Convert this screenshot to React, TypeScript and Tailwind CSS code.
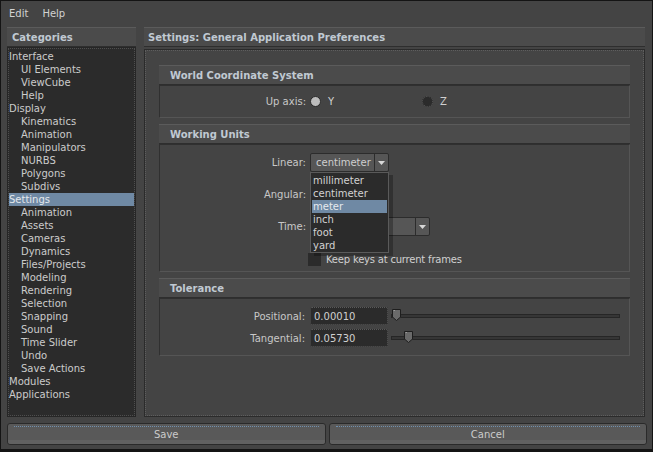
import React from "react";

const categories: { label: string; sub?: boolean; selected?: boolean }[] = [
  { label: "Interface" },
  { label: "UI Elements", sub: true },
  { label: "ViewCube", sub: true },
  { label: "Help", sub: true },
  { label: "Display" },
  { label: "Kinematics", sub: true },
  { label: "Animation", sub: true },
  { label: "Manipulators", sub: true },
  { label: "NURBS", sub: true },
  { label: "Polygons", sub: true },
  { label: "Subdivs", sub: true },
  { label: "Settings", selected: true },
  { label: "Animation", sub: true },
  { label: "Assets", sub: true },
  { label: "Cameras", sub: true },
  { label: "Dynamics", sub: true },
  { label: "Files/Projects", sub: true },
  { label: "Modeling", sub: true },
  { label: "Rendering", sub: true },
  { label: "Selection", sub: true },
  { label: "Snapping", sub: true },
  { label: "Sound", sub: true },
  { label: "Time Slider", sub: true },
  { label: "Undo", sub: true },
  { label: "Save Actions", sub: true },
  { label: "Modules" },
  { label: "Applications" },
];

const units = ["millimeter", "centimeter", "meter", "inch", "foot", "yard"];

function SectionHeader({ title }: { title: string }) {
  return (
    <div className="h-[20px] bg-[#4b4b4b] border-t border-[#5b5b5b] border-b border-b-[#2e2e2e] flex items-center pl-[11px] font-bold text-[#c0c9d2]">
      {title}
    </div>
  );
}

function Arrow() {
  return (
    <svg width="7" height="4" viewBox="0 0 7 4">
      <path d="M0 0 H7 L3.5 4 Z" fill="#d8d8d8" />
    </svg>
  );
}

function Dropdown({ value, width }: { value: string; width: string }) {
  return (
    <div className={`${width} h-[19px] bg-[#565656] border border-[#2c2c2c] rounded-[2px] flex items-stretch`}>
      <div className="flex-1 flex items-center pl-[5px] text-[#cfcfcf]">{value}</div>
      <div className="w-[14px] border-l border-[#2c2c2c] flex items-center justify-center">
        <Arrow />
      </div>
    </div>
  );
}

function Thumb() {
  return (
    <svg width="11" height="14" viewBox="0 0 11 14">
      <path d="M1.5 1.5 H9.5 V9 L5.5 12.5 L1.5 9 Z" fill="#6a6a6a" stroke="#1e1e1e" strokeWidth="1" />
      <path d="M2.5 2.5 H4" stroke="#9a9a9a" strokeWidth="1" />
    </svg>
  );
}

function SliderRow({ label, value, pos }: { label: string; value: string; pos: number }) {
  return (
    <div className="h-[18px] flex items-center">
      <div className="w-[145px] text-right text-[#c8c8c8]">{label}:</div>
      <div className="ml-[5px] w-[78px] h-[18px] bg-[#2b2b2b] border border-dotted border-[#5a5a5a] rounded-[2px] flex items-center pl-[3px] text-[#d0d0d0]">
        {value}
      </div>
      <div className="relative ml-[3px] w-[229px] h-[18px] flex items-center">
        <div className="w-full h-[4px] bg-[#363636] border border-[#262626]" />
        <div className="absolute top-[1px]" style={{ left: pos }}>
          <Thumb />
        </div>
      </div>
    </div>
  );
}

export default function App() {
  return (
    <div
      className="w-[653px] h-[452px] bg-[#444444] border border-[#141414] border-b-[3px] flex flex-col text-[10px] leading-[13px] text-[#c8c8c8] overflow-hidden"
      style={{ fontFamily: "'DejaVu Sans', sans-serif" }}
    >
      {/* menu bar */}
      <div className="h-[24px] flex items-center pl-[8px] gap-[14px] text-[#d2d2d2]">
        <span>Edit</span>
        <span>Help</span>
      </div>

      {/* main */}
      <div className="flex pl-[6px] pr-[7px] pt-[2px]">
        {/* left */}
        <div className="w-[129px] flex flex-col">
          <div className="h-[20px] bg-[#4b4b4b] border-t border-[#5b5b5b] border-b border-b-[#2e2e2e] flex items-center pl-[5px] font-bold text-[#c0c9d2]">
            Categories
          </div>
          <div className="h-[370px] border border-[#262626] bg-[#2b2b2b]">
            <div className="h-full border border-dotted border-[#4e4e4e] pt-[1px]">
              {categories.map((c, i) => (
                <div
                  key={i}
                  className={`h-[13px] flex items-center ${c.sub ? "pl-[12px]" : "pl-[0px]"} ${
                    c.selected ? "bg-[#6f89a4] text-[#e4e8ec]" : "text-[#cbcbcb]"
                  }`}
                >
                  {c.label}
                </div>
              ))}
            </div>
          </div>
        </div>

        {/* right */}
        <div className="ml-[8px] w-[501px] flex flex-col">
          <div className="h-[20px] bg-[#4b4b4b] border-t border-[#5b5b5b] border-b border-b-[#2e2e2e] flex items-center pl-[4px] font-bold text-[#c0c9d2]">
            Settings: General Application Preferences
          </div>
          <div className="mt-[2px] h-[368px] border border-[#2b2b2b]">
            <div className="h-full border border-dotted border-[#5e5e5e] px-[13px] pt-[14px] flex flex-col">
              {/* World Coordinate System */}
              <SectionHeader title="World Coordinate System" />
              <div className="h-[33px] border border-[#303030] border-r-[#555555] border-b-[#555555] flex items-center">
                <div className="w-[146px] text-right">Up axis:</div>
                <div className="ml-[4px] w-[112px] flex items-center">
                  <div className="w-[11px] h-[11px] rounded-full bg-[#bdbdbd] border border-[#2a2a2a]" />
                  <span className="ml-[7px] text-[#d0d0d0]">Y</span>
                </div>
                <div className="flex items-center">
                  <div className="w-[11px] h-[11px] rounded-full bg-[#2b2b2b] border border-dotted border-[#555]" />
                  <span className="ml-[7px] text-[#d0d0d0]">Z</span>
                </div>
              </div>

              {/* Working Units */}
              <div className="mt-[6px]">
                <SectionHeader title="Working Units" />
              </div>
              <div className="h-[128px] border border-[#303030] border-r-[#555555] border-b-[#555555] pt-[8px] flex flex-col">
                <div className="h-[19px] flex items-center relative z-10">
                  <div className="w-[146px] text-right">Linear:</div>
                  <div className="ml-[4px] relative">
                    <Dropdown value="centimeter" width="w-[79px]" />
                    <div className="absolute left-0 top-[19px] w-[79px] h-[81px] bg-[#2b2b2b] border border-[#5a5a5a] shadow-[4px_3px_0_rgba(0,0,0,0.28)] px-[1px] pt-[1px]">
                      {units.map((u) => (
                        <div
                          key={u}
                          className={`h-[13px] flex items-center pl-[1px] ${
                            u === "meter" ? "bg-[#6f89a4] text-[#e6eaee]" : "text-[#d2d2d2]"
                          }`}
                        >
                          {u}
                        </div>
                      ))}
                    </div>
                  </div>
                </div>
                <div className="mt-[13px] h-[19px] flex items-center">
                  <div className="w-[146px] text-right">Angular:</div>
                  <div className="ml-[4px]">
                    <Dropdown value="" width="w-[79px]" />
                  </div>
                </div>
                <div className="mt-[13px] h-[19px] flex items-center">
                  <div className="w-[146px] text-right">Time:</div>
                  <div className="ml-[4px]">
                    <Dropdown value="" width="w-[120px]" />
                  </div>
                </div>
                <div className="mt-[16px] h-[14px] flex items-center">
                  <div className="ml-[148px] w-[13px] h-[13px] bg-[#2b2b2b]" />
                  <span className="ml-[5px] text-[#d0d0d0] tracking-[-0.2px]">Keep keys at current frames</span>
                </div>
              </div>

              {/* Tolerance */}
              <div className="mt-[6px]">
                <SectionHeader title="Tolerance" />
              </div>
              <div className="h-[58px] border border-[#303030] border-r-[#555555] border-b-[#555555] pt-[8px] flex flex-col gap-[4px]">
                <SliderRow label="Positional" value="0.00010" pos={0} />
                <SliderRow label="Tangential" value="0.05730" pos={12} />
              </div>
            </div>
          </div>
        </div>
      </div>

      {/* buttons */}
      <div className="flex gap-[3px] pl-[6px] pr-[5px] mt-[6px]">
        {["Save", "Cancel"].map((b) => (
          <div
            key={b}
            className="flex-1 h-[22px] bg-[#595959] border border-[#2a2a2a] rounded-[3px] relative flex items-center justify-center text-[#cbcbcb]"
          >
            <div className="absolute left-[6px] right-[6px] top-[2px] border-t border-dotted border-[#6f8fae]" />
            <div className="absolute left-0 right-0 bottom-0 h-[4px] bg-[#616161] rounded-b-[3px]" />
            <span className="relative">{b}</span>
          </div>
        ))}
      </div>
    </div>
  );
}
